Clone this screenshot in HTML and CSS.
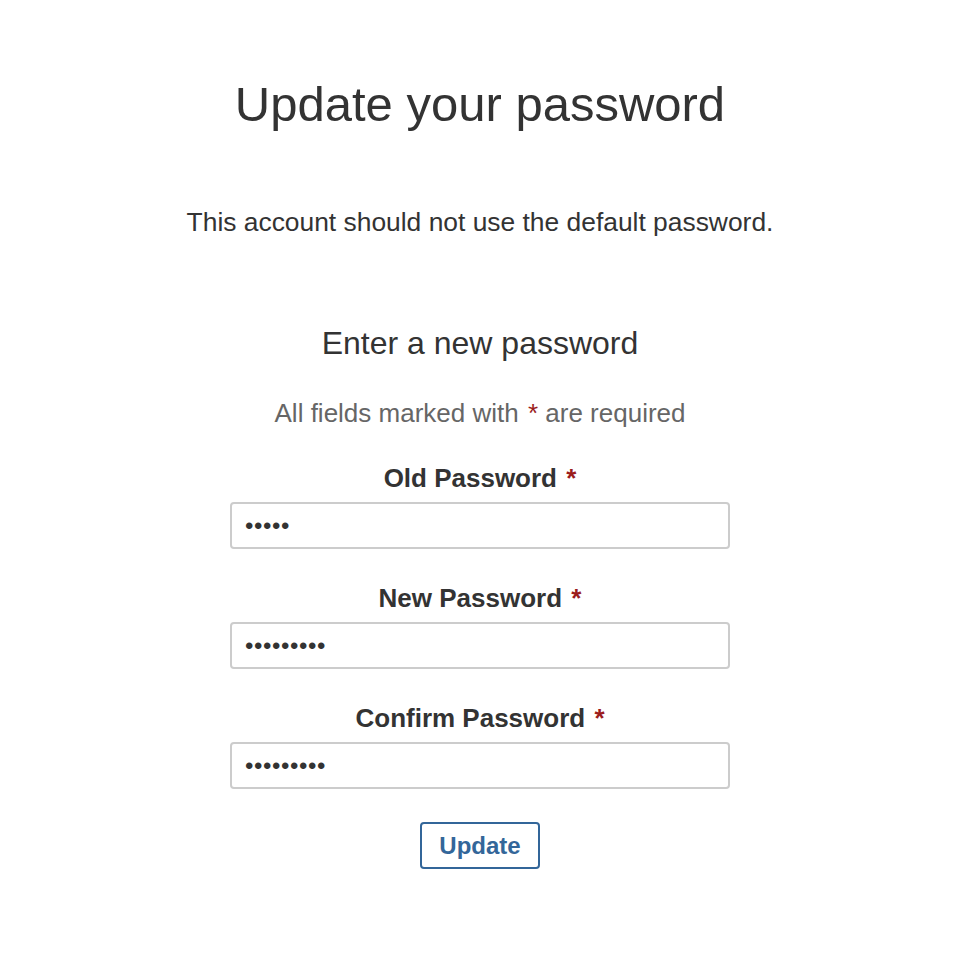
FILE: index.html
```html
<!DOCTYPE html>
<html lang="en">
<head>
  <meta charset="UTF-8">
  <meta name="viewport" content="width=device-width, initial-scale=1.0">
  <title>Update your password</title>
  <link rel="stylesheet" href="styles.css">
</head>
<body>
  <div class="page">
    <h1>Update your password</h1>
    <p class="notice">This account should not use the default password.</p>

    <form class="pw-form" onsubmit="return false">
      <h2>Enter a new password</h2>
      <p class="hint">All fields marked with <span class="req">*</span> are required</p>

      <div class="field">
        <label for="old">Old Password <span class="req">*</span></label>
        <input type="password" id="old" value="admin">
      </div>
      <div class="field">
        <label for="new">New Password <span class="req">*</span></label>
        <input type="password" id="new" value="secret123">
      </div>
      <div class="field">
        <label for="confirm">Confirm Password <span class="req">*</span></label>
        <input type="password" id="confirm" value="secret123">
      </div>

      <button type="submit" class="btn">Update</button>
    </form>
  </div>
</body>
</html>
```

FILE: styles.css
```css
body {
  margin: 0;
  font-family: "Liberation Sans", Arial, Helvetica, sans-serif;
  color: #333;
  background: #fff;
}
.page {
  text-align: center;
  padding-top: 75px;
}
h1 {
  font-size: 49px;
  font-weight: normal;
  line-height: 58px;
  margin: 0;
}
.notice {
  font-size: 26.4px;
  line-height: 30px;
  margin: 74px 0 0;
}
.pw-form {
  width: 500px;
  margin: 88px auto 0;
}
h2 {
  font-size: 32px;
  font-weight: normal;
  line-height: 36px;
  margin: 0;
}
.hint {
  color: #666;
  font-size: 26px;
  line-height: 30px;
  margin: 37px 0 0;
}
.req {
  color: #9b1c1c;
  margin-left: 2px;
}
.field {
  display: flex;
  flex-direction: column;
  gap: 9px;
  margin-top: 35px;
}
.field + .field {
  margin-top: 34px;
}
label {
  font-size: 26px;
  font-weight: bold;
  line-height: 30px;
}
input {
  box-sizing: border-box;
  width: 100%;
  height: 47px;
  border: 2px solid #ccc;
  border-radius: 4px;
  padding: 0 13px;
  font-family: inherit;
  font-size: 24px;
  letter-spacing: 0.6px;
  color: #333;
  background: #fff;
}
.btn {
  box-sizing: border-box;
  margin-top: 33px;
  width: 120px;
  height: 47px;
  border: 2px solid #336699;
  border-radius: 4px;
  background: #fff;
  color: #336699;
  font-family: inherit;
  font-size: 24px;
  font-weight: bold;
  cursor: pointer;
}
```
